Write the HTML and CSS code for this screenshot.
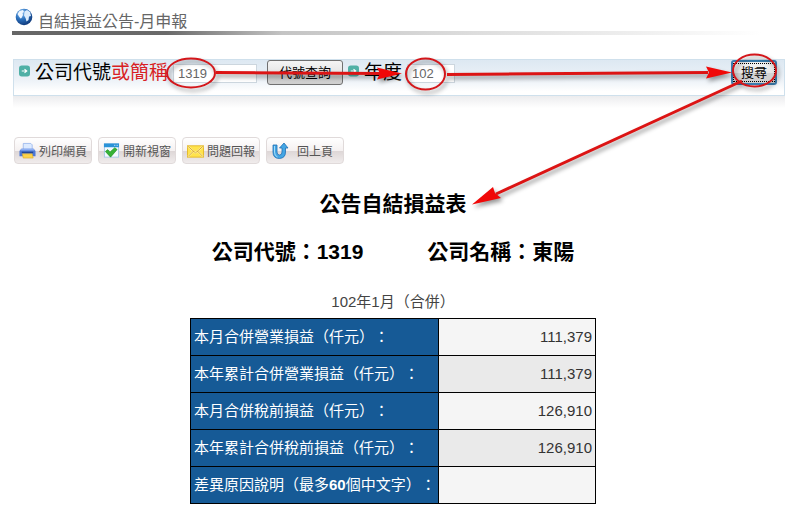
FILE: index.html
```html
<!DOCTYPE html>
<html lang="zh-Hant">
<head>
    <meta charset="utf-8">
    <title>自結損益公告-月申報</title>
    <link rel="stylesheet" href="styles.css">
</head>
<body>
    <header class="page-header">
        <div class="page-title">
            <svg class="globe" width="18" height="18" viewBox="0 0 18 18">
                <defs>
                    <radialGradient id="sea" cx="0.35" cy="0.25" r="0.8">
                        <stop offset="0" stop-color="#8fc4f4"/>
                        <stop offset="0.5" stop-color="#2b70bd"/>
                        <stop offset="1" stop-color="#0d3474"/>
                    </radialGradient>
                </defs>
                <circle cx="9" cy="9" r="8.3" fill="url(#sea)"/>
                <path d="M2.5 6 4.5 3 8 2 9 4 7.500 5 8 7 6.500 10 5.500 10.500 4 8.500z" fill="#eef6ff"/>
                <path d="M9.500 3.500 12 2 15 4 16 8 14 8.500 13.500 12 11.500 13.500 10.500 10 9 7.500z" fill="#dcecfc"/>
            </svg>
            <h1>自結損益公告-月申報</h1>
        </div>
        <div class="rule"></div>
    </header>

    <form class="search">
        <div class="search-bar">
            <svg class="bullet" width="11" height="12" viewBox="0 0 12 12">
                <rect width="12" height="12" rx="3" fill="#4fb0a6"/>
                <path d="M3 6h5M6 4l2.500 2L6 8" fill="none" stroke="#fff" stroke-width="1.200"/>
            </svg>
            <label for="company">公司代號<span class="red">或簡稱</span></label>
            <input id="company" class="company" type="text" value="1319">
            <button type="button" class="btn btn-lookup">代號查詢</button>
            <svg class="bullet" width="11" height="12" viewBox="0 0 12 12">
                <rect width="12" height="12" rx="3" fill="#4fb0a6"/>
                <path d="M3 6h5M6 4l2.500 2L6 8" fill="none" stroke="#fff" stroke-width="1.200"/>
            </svg>
            <label for="year">年度</label>
            <input id="year" class="year" type="text" value="102">
            <button type="button" class="btn btn-search"><span>搜尋</span></button>
        </div>
        <div class="search-shadow"></div>
    </form>

    <div class="toolbar">
        <button type="button" class="tool">
            <svg width="18" height="18" viewBox="0 0 18 18">
                <path d="M4.500 1h8l1.500 1.500V9h-9.500z" fill="#dceaff" stroke="#86a9e8" stroke-width=".7"/>
                <path d="M2.500 6.500h13l2 2.500v5.500H.500V9z" fill="#4d78d4"/>
                <path d="M2.500 6.500h13l1 2h-15z" fill="#8eb0f2"/>
                <path d="M3 10.500h12" stroke="#234592" stroke-width="1.500"/>
                <path d="M3.500 12h10.500l1 4.500H4.500z" fill="#fcd34c" stroke="#d9a620" stroke-width=".6"/>
            </svg>
            <span>列印網頁</span>
        </button>
        <button type="button" class="tool">
            <svg width="18" height="18" viewBox="0 0 18 18">
                <rect x="1.500" y="1.500" width="15" height="14" fill="#f4faff" stroke="#a8c8e6"/>
                <rect x="1" y="1" width="16" height="4" fill="#2b93d8"/>
                <path d="M12 3h1M14.500 3h1" stroke="#fff"/>
                <path d="M2.500 9.500 5 7.500l2.500 2.500 5-4.500 2.500 2-7 8z" fill="#36b336" stroke="#178417" stroke-width=".6"/>
            </svg>
            <span>開新視窗</span>
        </button>
        <button type="button" class="tool">
            <svg width="18" height="18" viewBox="0 0 18 18">
                <rect x=".5" y="3.500" width="17" height="12" fill="#ffe34d" stroke="#e4b92a"/>
                <path d="M1 15l6-6M17 15l-6-6M1 4l8 7 8-7" fill="none" stroke="#fff6b0" stroke-width="1.800"/>
                <path d="M1 15l6-6M17 15l-6-6M1 4l8 7 8-7" fill="none" stroke="#d39a18" stroke-width=".9"/>
            </svg>
            <span>問題回報</span>
        </button>
        <button type="button" class="tool tool-back">
            <svg width="18" height="18" viewBox="0 0 18 18">
                <path d="M2 3h4v7q0 3 2.500 3t2.500-3V6H8.500L13 1l4 5h-2.500v4q0 6-6 6.500Q2 16.500 2 10z" fill="#44a6e4" stroke="#1f6fb4" stroke-width=".8"/>
                <path d="M3.500 4v6q0 4 3 5" fill="none" stroke="#a5dcf8"/>
            </svg>
            <span>回上頁</span>
        </button>
    </div>

    <main class="report">
        <h2>公告自結損益表</h2>
        <h2 class="company-line"><span>公司代號：1319</span><span>公司名稱：東陽</span></h2>
        <table>
            <caption>102年1月（合併）</caption>
            <tr>
                <th scope="row">本月合併營業損益（仟元）：</th>
                <td>111,379</td>
            </tr>
            <tr>
                <th scope="row">本年累計合併營業損益（仟元）：</th>
                <td>111,379</td>
            </tr>
            <tr>
                <th scope="row">本月合併稅前損益（仟元）：</th>
                <td>126,910</td>
            </tr>
            <tr>
                <th scope="row">本年累計合併稅前損益（仟元）：</th>
                <td>126,910</td>
            </tr>
            <tr>
                <th scope="row">差異原因說明（最多<b>60</b>個中文字）：</th>
                <td></td>
            </tr>
        </table>
    </main>

    <!-- red pen marks: fill in code, then year, then search -->
    <svg class="marks" width="789" height="220" viewBox="0 0 789 220">
        <g fill="none" stroke="#d4161a" stroke-width="2">
            <ellipse cx="191" cy="73" rx="24" ry="14.500"/>
            <ellipse cx="425.500" cy="74" rx="19.500" ry="15.500"/>
            <ellipse cx="754.500" cy="70.500" rx="21.500" ry="16"/>
        </g>
        <g stroke="#dc1414" stroke-width="3">
            <path d="M216 72.500 382 73.500"/>
            <path d="M447 74.500 708 72.500"/>
            <path d="M742 81 496 194"/>
        </g>
        <g fill="#f00808">
            <path d="M402 73.500 377 79.500l3-6-3-6z"/>
            <path d="M732 72.500 706 78.500l3-6-3-6z"/>
            <path d="M472 204.500 493 187l2 6 6 5z"/>
        </g>
    </svg>
</body>
</html>
```

FILE: styles.css
```css
* { box-sizing: border-box; }
body { margin: 0; background: #fff; font-family: "Liberation Sans", "Noto Sans CJK TC", sans-serif; color: #000; text-spacing-trim: space-all; }

.page-header { padding: 8px 4px 0 12px; }
.page-title { display: flex; height: 23px; padding-left: 3px; gap: 5px; }
.page-title h1 { margin: 4px 0 0; font-size: 16px; line-height: 20px; font-weight: normal; color: #666; }
.rule { height: 4px; background: linear-gradient(to right, #666 0%, #6a6a6a 20%, #c4c4c4 35%, #ddd 60%, #eee 80%, #fff 97%); }

.search { margin: 24px 4px 0 13px; }
.search-bar { display: flex; align-items: flex-start; height: 37px; padding: 0 7px 0 5px; border: 1px solid #cfe0ec; background: linear-gradient(#dde8f2, #eef3f8 60%, #fff 90%); }
.search-bar label { margin: 0 5px 0 5px; font-size: 19px; line-height: 25px; white-space: nowrap; }
.search-bar input { height: 19px; margin-top: 4px; padding: 0 4px; border: 1px solid #ccd6de; background: #fff; font: 13px "Liberation Sans", sans-serif; color: #666; }
.search-bar .company { width: 84px; }
.search-bar .year { width: 48px; }
.bullet { flex: none; margin-top: 5px; }
.red { color: #d81e24; }
.search-shadow { height: 12px; background: linear-gradient(#ececee, #fff); }

.btn { height: 25px; padding: 0 2px; border: 1px solid #707070; border-radius: 3px; background: linear-gradient(#f4f4f4, #e6e6e6 50%, #d4d4d4 51%, #cfcfcf); font: 13px/17px "Liberation Sans", "Noto Sans CJK TC", sans-serif; color: #000; white-space: nowrap; }
.btn-lookup { width: 76px; margin: 0 5px 0 10px; }
.btn-search { width: 46px; margin-left: auto; border: 2px solid #3c7fb1; padding: 0; }
.btn-search span { display: block; border: 1px dotted #000; }

.toolbar { display: flex; gap: 6px; margin: 29px 14px 0; }
.tool { display: flex; align-items: center; width: 78px; height: 27px; padding: 0 4px; gap: 3px; border: 1px solid #e0dada; border-radius: 4px; background: linear-gradient(#fff, #f5f1f1 50%, #ddd6d6 51%, #f0ecec); font: 12px "Liberation Sans", "Noto Sans CJK TC", sans-serif; color: #555; white-space: nowrap; }
.tool-back { gap: 8px; }

.report { padding-right: 3px; text-align: center; }
.report h2 { margin: 28px 0 0; font-size: 21px; line-height: 24px; }
.report .company-line { display: flex; justify-content: center; gap: 64px; margin-top: 24px; }
table { width: 406px; margin: 28px auto 0; border-collapse: collapse; font-size: 15px; line-height: 18px; }
caption { padding-bottom: 6px; font-size: 15px; line-height: 20px; color: #444; }
th, td { height: 37px; padding: 0 3px; border: 1px solid #000; }
th { width: 248px; padding-right: 0; background: #165a96; color: #fff; text-align: left; font-weight: normal; white-space: nowrap; }
td { background: #f5f5f5; color: #333; text-align: right; }
tr:nth-child(even) td { background: #eaeaea; }

.marks { position: absolute; top: 0; left: 0; pointer-events: none; filter: drop-shadow(2px 3px 2px rgba(0,0,0,0.4)); }
```
